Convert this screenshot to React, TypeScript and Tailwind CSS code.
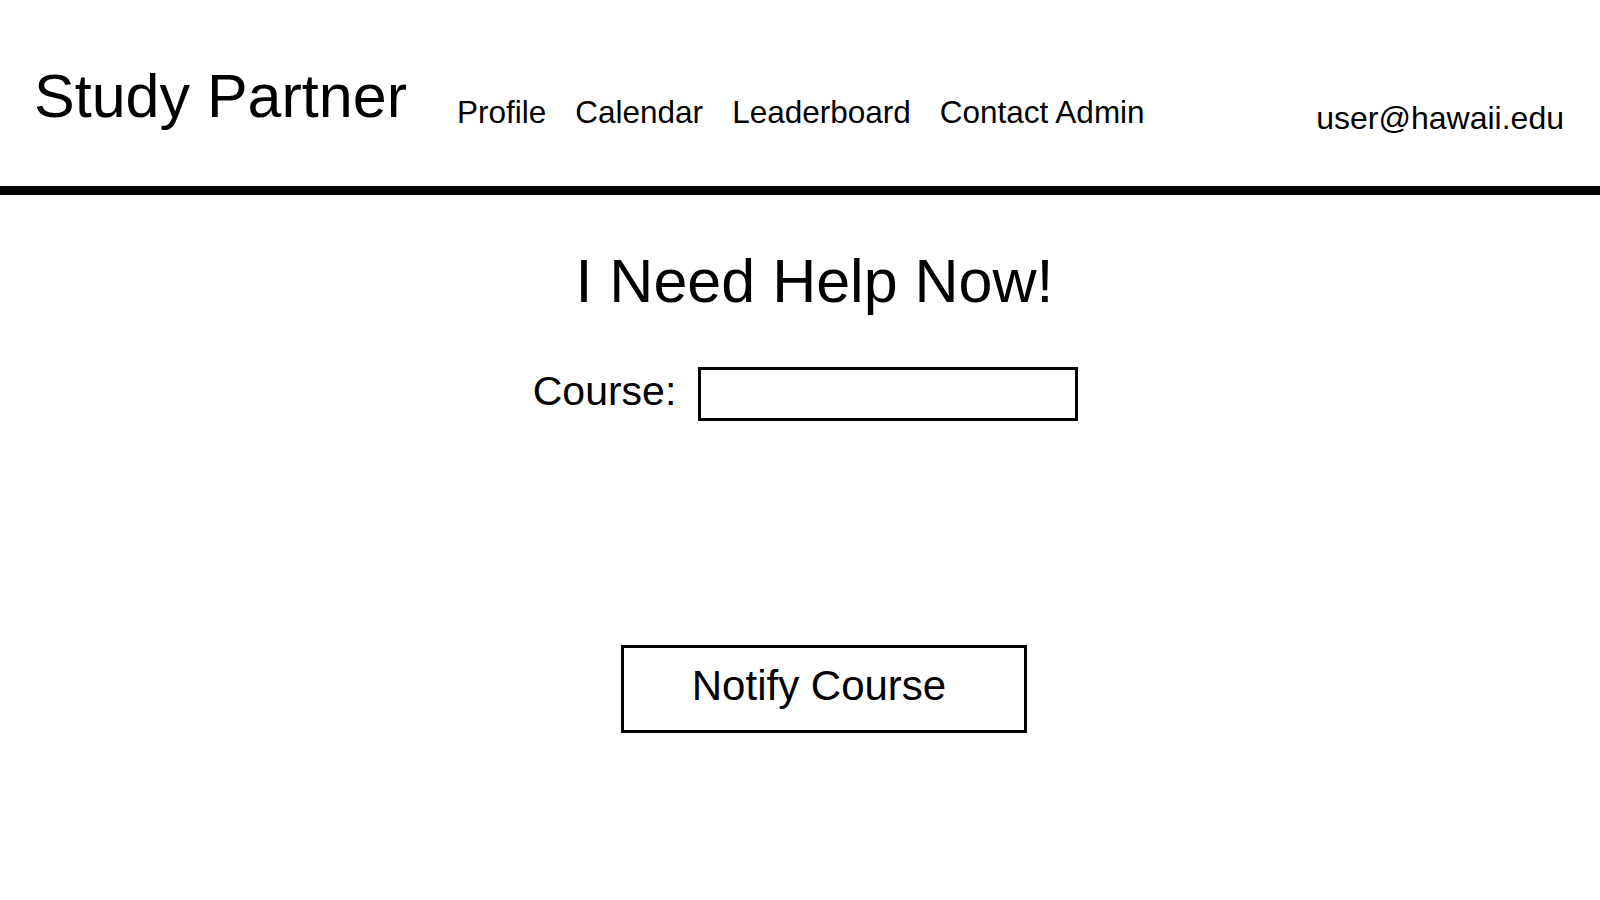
import React from "react";

export default function App() {
  return (
    <div className="min-h-[900px] w-full bg-white text-black [font-family:'Liberation_Sans',Arial,sans-serif]">
      <header className="flex h-[186px] items-start pl-[34px] pr-[36px]">
        <div className="mt-[66px] text-[61px] leading-none whitespace-nowrap">Study Partner</div>
        <nav className="ml-[50px] mt-[97px] flex gap-[29px] text-[31.5px] leading-none">
          <a className="cursor-pointer">Profile</a>
          <a className="cursor-pointer">Calendar</a>
          <a className="cursor-pointer">Leaderboard</a>
          <a className="cursor-pointer">Contact Admin</a>
        </nav>
        <div className="ml-auto mt-[102px] text-[32px] leading-none">user@hawaii.edu</div>
      </header>
      <div className="h-[9px] w-full bg-black" />
      <main className="flex flex-col items-center">
        <h1 className="ml-[29px] mt-[56px] text-[61px] leading-none font-normal">I Need Help Now!</h1>
        <div className="ml-[11px] mt-[55px] flex items-center gap-[22px]">
          <label className="mt-[-6px] text-[41px] leading-none">Course:</label>
          <input
            type="text"
            className="h-[54px] w-[380px] border-[3px] border-black bg-white px-2 text-[28px] outline-none"
          />
        </div>
        <button className="ml-[48px] mt-[224px] flex h-[88px] w-[406px] items-center justify-center border-[3px] border-black bg-white pb-[6px] pr-[10px] text-[42px] leading-none">
          Notify Course
        </button>
      </main>
    </div>
  );
}
